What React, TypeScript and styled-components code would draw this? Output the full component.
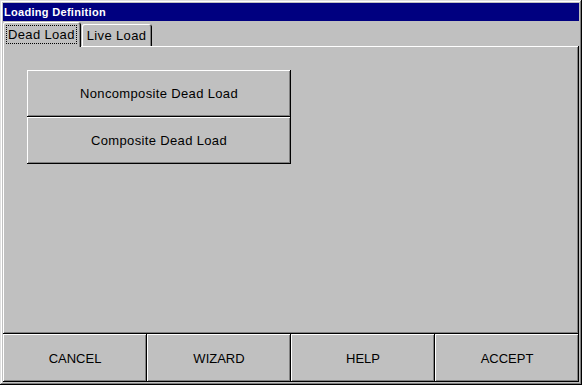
import React, { useState } from 'react';
import styled, { createGlobalStyle } from 'styled-components';

const GlobalStyle = createGlobalStyle`
  html, body {
    margin: 0;
    padding: 0;
    background: #c0c0c0;
  }
  * {
    box-sizing: border-box;
  }
`;

const raised = `
  box-shadow:
    inset -1px -1px #000000,
    inset 1px 1px #ffffff,
    inset -2px -2px #808080,
    inset 2px 2px #c0c0c0;
`;

const Window = styled.div`
  width: 582px;
  height: 385px;
  background: #c0c0c0;
  padding: 3px;
  display: flex;
  flex-direction: column;
  font-family: "Liberation Sans", Arial, sans-serif;
  color: #000;
  box-shadow:
    inset -1px -1px #000000,
    inset 1px 1px #dfdfdf,
    inset -2px -2px #808080,
    inset 2px 2px #ffffff;
`;

const TitleBar = styled.div`
  height: 18px;
  background: #000080;
  color: #ffffff;
  font-weight: 700;
  font-size: 11px;
  letter-spacing: 0.3px;
  line-height: 18px;
  padding-left: 1px;
  flex-shrink: 0;
`;

const TabStrip = styled.div`
  height: 25px;
  display: flex;
  align-items: flex-end;
  position: relative;
  z-index: 1;
  flex-shrink: 0;
`;

const Tab = styled.button<{ $active: boolean }>`
  font-family: inherit;
  font-size: 13px;
  letter-spacing: 0.35px;
  color: #000;
  background: #c0c0c0;
  border: none;
  padding: 0 5px 0 4px;
  margin: 0;
  cursor: pointer;
  height: ${(p) => (p.$active ? '25px' : '22px')};
  margin-bottom: ${(p) => (p.$active ? '-1px' : '0')};
  margin-left: ${(p) => (p.$active ? '0' : '1px')};
  border-top-left-radius: 2px;
  border-top-right-radius: 3px;
  box-shadow:
    inset 1px 1px #ffffff,
    inset -1px 0 #000000,
    inset -2px 0 #808080;
  display: flex;
  align-items: center;
`;

const FocusLabel = styled.span<{ $focused: boolean }>`
  padding: 0 1px;
  line-height: 17px;
  outline: ${(p) => (p.$focused ? '1px dotted #000' : 'none')};
`;

const Panel = styled.div`
  flex: 1;
  padding: 24px;
  box-shadow:
    inset -1px -1px #000000,
    inset 1px 1px #ffffff,
    inset -2px -2px #808080;
`;

const ButtonStack = styled.div`
  width: 264px;
  display: flex;
  flex-direction: column;
`;

const StackButton = styled.button`
  height: 47px;
  font-family: inherit;
  font-size: 13px;
  letter-spacing: 0.35px;
  color: #000;
  background: #c0c0c0;
  border: none;
  cursor: pointer;
  ${raised}
`;

const ButtonBar = styled.div`
  height: 48px;
  display: grid;
  grid-template-columns: repeat(4, 1fr);
  flex-shrink: 0;
`;

const BarButton = styled.button`
  font-family: inherit;
  font-size: 13px;
  color: #000;
  background: #c0c0c0;
  border: none;
  cursor: pointer;
  padding: 0;
  ${raised}
`;

const tabs = ['Dead Load', 'Live Load'];

export default function App() {
  const [active, setActive] = useState(0);

  return (
    <>
      <GlobalStyle />
      <Window>
        <TitleBar>Loading Definition</TitleBar>
        <TabStrip>
          {tabs.map((t, i) => (
            <Tab key={t} $active={active === i} onClick={() => setActive(i)}>
              <FocusLabel $focused={active === i}>{t}</FocusLabel>
            </Tab>
          ))}
        </TabStrip>
        <Panel>
          {active === 0 && (
            <ButtonStack>
              <StackButton>Noncomposite Dead Load</StackButton>
              <StackButton>Composite Dead Load</StackButton>
            </ButtonStack>
          )}
        </Panel>
        <ButtonBar>
          <BarButton>CANCEL</BarButton>
          <BarButton>WIZARD</BarButton>
          <BarButton>HELP</BarButton>
          <BarButton>ACCEPT</BarButton>
        </ButtonBar>
      </Window>
    </>
  );
}
